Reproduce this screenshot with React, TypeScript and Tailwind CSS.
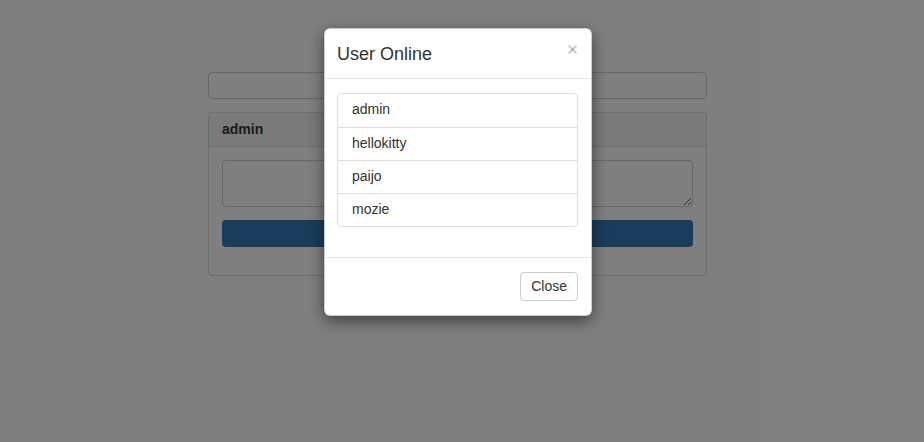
import { X } from 'lucide-react';

const users = ['admin', 'hellokitty', 'paijo', 'mozie'];

export default function App() {
  return (
    <div className="relative w-full h-[442px] bg-white overflow-hidden font-['Liberation_Sans',Arial,sans-serif] text-[14px] text-[#333]">
      {/* Page behind the backdrop */}
      <div className="w-[499px] ml-[208px] pt-[72px]">
        <div className="h-[27px] border border-[#ccc] rounded-[4px] bg-white" />
        <div className="mt-[13px] border border-[#ddd] rounded-[4px] bg-white">
          <div className="h-[34px] px-[13px] flex items-center bg-[#f5f5f5] border-b border-[#ddd] rounded-t-[4px] font-bold">
            admin
          </div>
          <div className="px-[13px] pt-[13px] pb-[28px]">
            <textarea className="block w-full h-[47px] border border-[#ccc] rounded-[4px] resize-y" />
            <div className="mt-[13px] h-[27px] bg-[#337ab7] rounded-[4px]" />
          </div>
        </div>
      </div>

      {/* Backdrop */}
      <div className="absolute inset-0 bg-black/50" />

      {/* Modal */}
      <div className="absolute left-[324px] top-[28px] w-[268px] bg-white rounded-[6px] shadow-[0_5px_15px_rgba(0,0,0,0.5)] border border-black/20">
        <div className="relative h-[50px] flex items-center px-[12px] border-b border-[#e5e5e5]">
          <h4 className="text-[18px] text-[#333] leading-none">User Online</h4>
          <button className="absolute right-[12px] top-[14px] text-black/20">
            <X className="w-[13px] h-[13px]" strokeWidth={4} />
          </button>
        </div>
        <div className="pl-[12px] pr-[13px] pt-[14px] pb-[30px]">
          <ul className="border border-[#ddd] rounded-[4px]">
            {users.map((u, i) => (
              <li
                key={u}
                className={`h-[33px] px-[14px] pb-[2px] flex items-center ${i > 0 ? 'border-t border-[#ddd]' : ''}`}
              >
                {u}
              </li>
            ))}
          </ul>
        </div>
        <div className="border-t border-[#e5e5e5] pl-[12px] pr-[13px] pt-[14px] pb-[14px] flex justify-end">
          <button className="h-[29px] px-[10px] border border-[#ccc] rounded-[4px] bg-white text-[14px] text-[#333]">
            Close
          </button>
        </div>
      </div>
    </div>
  );
}
